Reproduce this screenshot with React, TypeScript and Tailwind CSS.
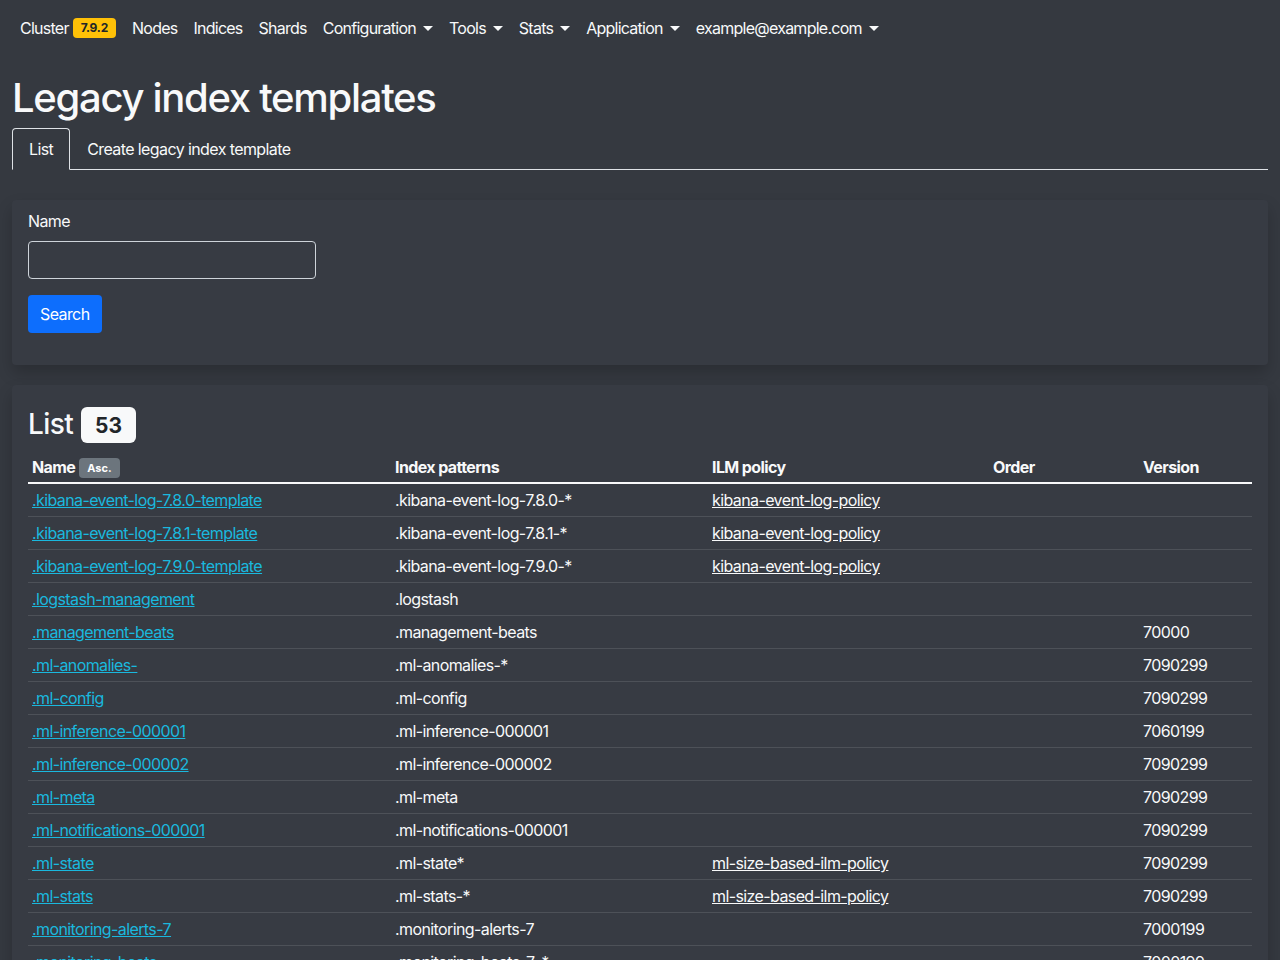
import { ReactNode } from 'react';

type Row = {
  name: string;
  patterns: string;
  ilm?: string;
  order?: string;
  version?: string;
};

const rows: Row[] = [
  { name: '.kibana-event-log-7.8.0-template', patterns: '.kibana-event-log-7.8.0-*', ilm: 'kibana-event-log-policy' },
  { name: '.kibana-event-log-7.8.1-template', patterns: '.kibana-event-log-7.8.1-*', ilm: 'kibana-event-log-policy' },
  { name: '.kibana-event-log-7.9.0-template', patterns: '.kibana-event-log-7.9.0-*', ilm: 'kibana-event-log-policy' },
  { name: '.logstash-management', patterns: '.logstash' },
  { name: '.management-beats', patterns: '.management-beats', version: '70000' },
  { name: '.ml-anomalies-', patterns: '.ml-anomalies-*', version: '7090299' },
  { name: '.ml-config', patterns: '.ml-config', version: '7090299' },
  { name: '.ml-inference-000001', patterns: '.ml-inference-000001', version: '7060199' },
  { name: '.ml-inference-000002', patterns: '.ml-inference-000002', version: '7090299' },
  { name: '.ml-meta', patterns: '.ml-meta', version: '7090299' },
  { name: '.ml-notifications-000001', patterns: '.ml-notifications-000001', version: '7090299' },
  { name: '.ml-state', patterns: '.ml-state*', ilm: 'ml-size-based-ilm-policy', version: '7090299' },
  { name: '.ml-stats', patterns: '.ml-stats-*', ilm: 'ml-size-based-ilm-policy', version: '7090299' },
  { name: '.monitoring-alerts-7', patterns: '.monitoring-alerts-7', version: '7000199' },
  { name: '.monitoring-beats', patterns: '.monitoring-beats-7-*', version: '7000199' },
  { name: '.monitoring-es', patterns: '.monitoring-es-7-*', version: '7000199' },
];

function Caret() {
  return (
    <span className="ml-[7px] inline-block w-0 h-0 border-x-[5px] border-x-transparent border-t-[5px] border-t-[#f8f9fa] align-middle" />
  );
}

function NavItem({ children, dropdown }: { children: ReactNode; dropdown?: boolean }) {
  return (
    <a href="#" className="px-2 flex items-center text-[#f8f9fa]">
      {children}
      {dropdown && <Caret />}
    </a>
  );
}

export default function App() {
  return (
    <div className="min-h-[960px] bg-[#353940] text-[#f8f9fa] font-['Inter',sans-serif] text-base">
      {/* Navbar */}
      <nav className="h-14 flex items-center px-3 text-[16px] tracking-[-0.75px]">
        <a href="#" className="px-2 flex items-center">
          Cluster
          <span className="ml-1 bg-[#ffc107] text-[#212529] text-[12px] font-bold rounded px-[8px] h-5 flex items-center tracking-[-0.2px]">
            7.9.2
          </span>
        </a>
        <NavItem>Nodes</NavItem>
        <NavItem>Indices</NavItem>
        <NavItem>Shards</NavItem>
        <NavItem dropdown>Configuration</NavItem>
        <NavItem dropdown>Tools</NavItem>
        <NavItem dropdown>Stats</NavItem>
        <NavItem dropdown>Application</NavItem>
        <NavItem dropdown>example@example.com</NavItem>
      </nav>

      <main className="px-3">
        <h1 className="text-[40px] font-medium leading-[1.2] tracking-[-1.3px] mt-[18px] mb-[6px]">Legacy index templates</h1>

        {/* Tabs */}
        <div className="flex border-b border-[#dee2e6] text-[16px] tracking-[-0.6px]">
          <a href="#" className="-mb-px px-4 pt-2 pb-[7px] border border-[#dee2e6] border-b-[#353940] rounded-t bg-[#353940]">
            List
          </a>
          <a href="#" className="px-4 pt-2 pb-[7px] border border-transparent">
            Create legacy index template
          </a>
        </div>

        {/* Search card */}
        <div className="mt-[30px] bg-[#373b43] rounded shadow-[0_0.5rem_1rem_rgba(0,0,0,0.2)] px-4 pt-[9px] pb-8">
          <label className="block text-[16px] mb-2 tracking-[-0.6px]">Name</label>
          <input
            type="text"
            className="block w-[288px] h-[38px] rounded border border-[#ced4da] bg-transparent px-3 outline-none"
          />
          <button className="mt-4 bg-[#0d6efd] text-white rounded px-3 h-[38px] text-[16px] tracking-[-0.6px]">
            Search
          </button>
        </div>

        {/* List card */}
        <div className="mt-5 bg-[#373b43] rounded shadow-[0_0.5rem_1rem_rgba(0,0,0,0.2)] px-4 pt-[22px]">
          <h3 className="flex items-center text-[28px] font-medium leading-[1.2] tracking-[-0.6px] mb-2">
            List
            <span className="ml-2 bg-[#f8f9fa] text-[#212529] text-[21px] font-bold rounded-md px-[14px] h-9 flex items-center leading-none tracking-normal">
              53
            </span>
          </h3>
          <table className="w-full text-[16px] tracking-[-0.6px] border-collapse">
            <thead>
              <tr className="border-b-2 border-[#f8f9fa] text-left">
                <th className="w-[363px] px-1 pt-1 pb-[3px] font-bold">
                  Name
                  <span className="ml-1 inline-block bg-[#6c757d] text-white text-[11px] font-bold rounded px-[8px] h-5 leading-5 align-[1px] tracking-normal">
                    Asc.
                  </span>
                </th>
                <th className="w-[317px] px-1 pt-1 pb-[3px] font-bold">Index patterns</th>
                <th className="w-[281px] px-1 pt-1 pb-[3px] font-bold">ILM policy</th>
                <th className="w-[150px] px-1 pt-1 pb-[3px] font-bold">Order</th>
                <th className="px-1 pt-1 pb-[3px] font-bold">Version</th>
              </tr>
            </thead>
            <tbody>
              {rows.map((r) => (
                <tr key={r.name} className="border-b border-[#4d5158]">
                  <td className="px-1 py-1">
                    <a href="#" className="text-[#1ab8de] underline">
                      {r.name}
                    </a>
                  </td>
                  <td className="px-1 py-1">{r.patterns}</td>
                  <td className="px-1 py-1">
                    {r.ilm && (
                      <a href="#" className="underline">
                        {r.ilm}
                      </a>
                    )}
                  </td>
                  <td className="px-1 py-1">{r.order}</td>
                  <td className="px-1 py-1">{r.version}</td>
                </tr>
              ))}
            </tbody>
          </table>
        </div>
      </main>
    </div>
  );
}
